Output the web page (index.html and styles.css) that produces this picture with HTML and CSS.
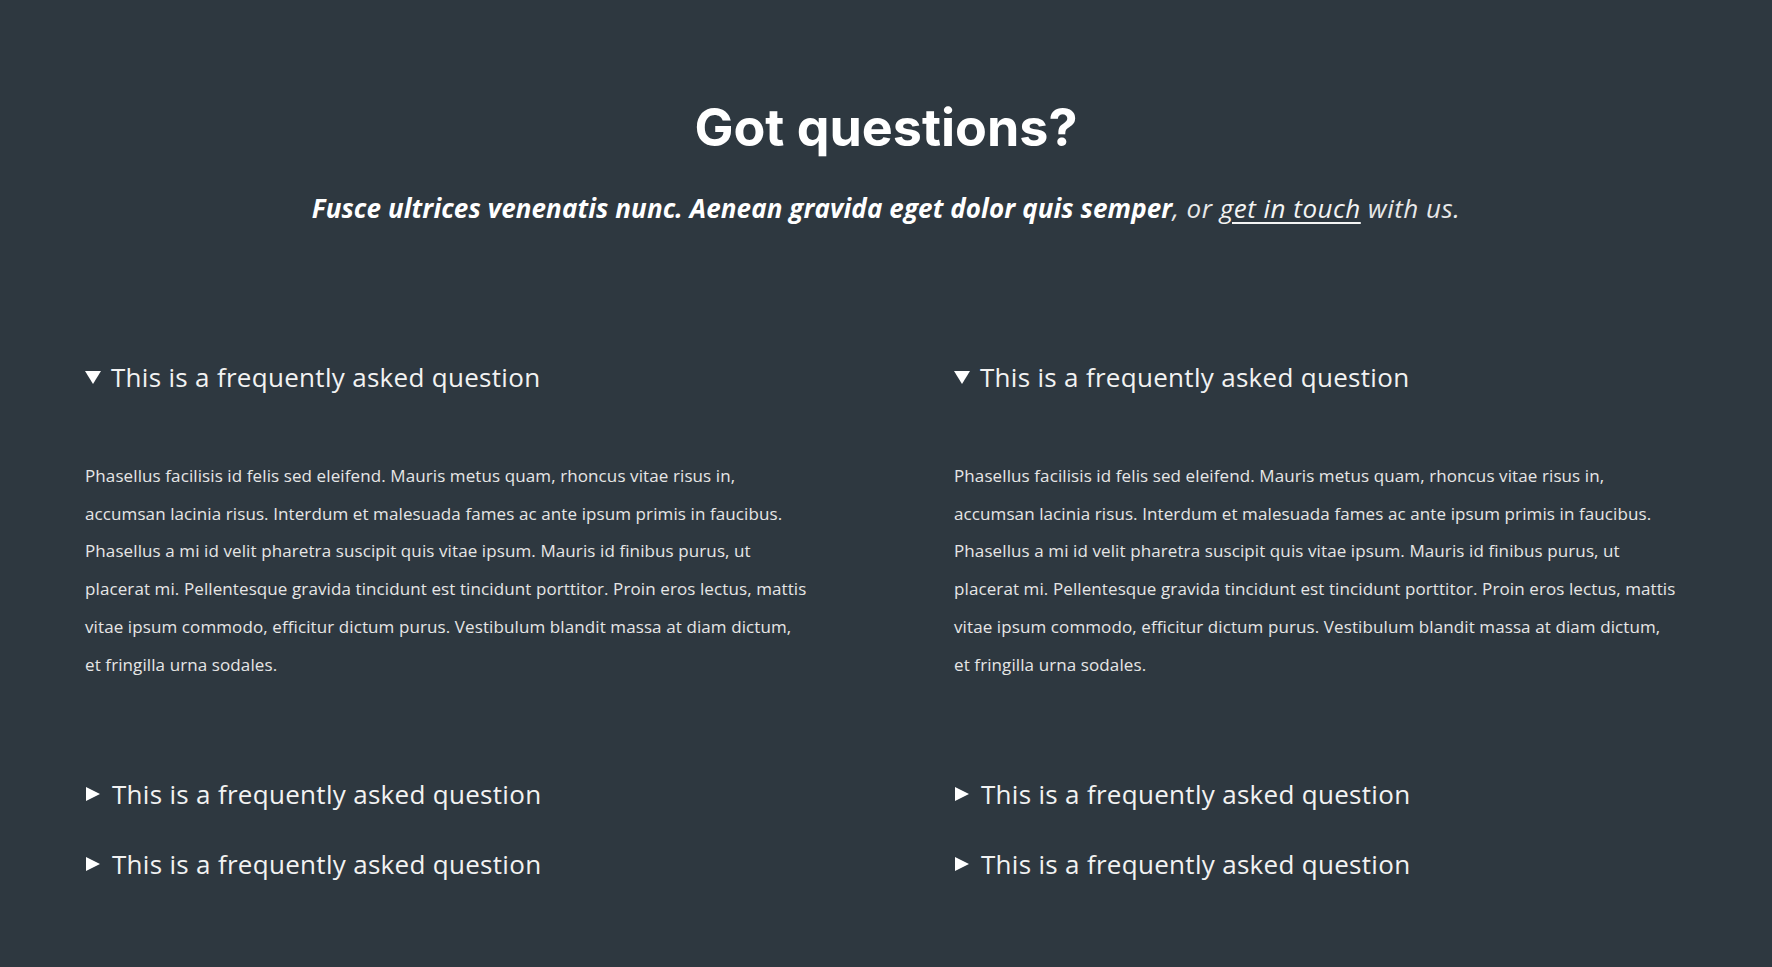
FILE: index.html
```html
<!DOCTYPE html>
<html lang="en">
<head>
  <meta charset="UTF-8">
  <title>FAQ</title>
  <link rel="stylesheet" href="styles.css">
</head>
<body>
  <section class="faq">
    <header class="faq-header">
      <h1>Got questions?</h1>
      <p class="lead"><strong>Fusce ultrices venenatis nunc. Aenean gravida eget dolor quis semper</strong>, or <a href="#">get in touch</a> with us.</p>
    </header>

    <div class="faq-grid">
      <details open>
        <summary>This is a frequently asked question</summary>
        <p>Phasellus facilisis id felis sed eleifend. Mauris metus quam, rhoncus vitae risus in, accumsan lacinia risus. Interdum et malesuada fames ac ante ipsum primis in faucibus. Phasellus a mi id velit pharetra suscipit quis vitae ipsum. Mauris id finibus purus, ut placerat mi. Pellentesque gravida tincidunt est tincidunt porttitor. Proin eros lectus, mattis vitae ipsum commodo, efficitur dictum purus. Vestibulum blandit massa at diam dictum, et fringilla urna sodales.</p>
      </details>
      <details open>
        <summary>This is a frequently asked question</summary>
        <p>Phasellus facilisis id felis sed eleifend. Mauris metus quam, rhoncus vitae risus in, accumsan lacinia risus. Interdum et malesuada fames ac ante ipsum primis in faucibus. Phasellus a mi id velit pharetra suscipit quis vitae ipsum. Mauris id finibus purus, ut placerat mi. Pellentesque gravida tincidunt est tincidunt porttitor. Proin eros lectus, mattis vitae ipsum commodo, efficitur dictum purus. Vestibulum blandit massa at diam dictum, et fringilla urna sodales.</p>
      </details>
      <details>
        <summary>This is a frequently asked question</summary>
      </details>
      <details>
        <summary>This is a frequently asked question</summary>
      </details>
      <details>
        <summary>This is a frequently asked question</summary>
      </details>
      <details>
        <summary>This is a frequently asked question</summary>
      </details>
    </div>
  </section>
</body>
</html>
```

FILE: styles.css
```css
body {
  margin: 0;
  background-color: #2e3840;
  color: #f4f4f4;
  font-family: "Open Sans", Arial, sans-serif;
}
.faq {
  padding: 96px 85px 60px;
}
.faq-header {
  text-align: center;
}
.faq-header h1 {
  margin: 0;
  font-family: Inter, Arial, sans-serif;
  font-size: 52px;
  font-weight: 700;
  line-height: 64px;
  color: #fff;
}
.lead {
  margin: 32px 0 0;
  font-size: 26px;
  font-style: italic;
  line-height: 32px;
  letter-spacing: 0.5px;
  color: #e8e8e8;
}
.lead strong {
  font-weight: 700;
  letter-spacing: 0.1px;
  color: #fff;
}
.lead a {
  color: #f4f4f4;
  text-decoration: underline;
  text-underline-offset: 4px;
}
.faq-grid {
  display: grid;
  grid-template-columns: 1fr 1fr;
  column-gap: 136px;
  row-gap: 30px;
  margin-top: 133px;
}
details summary {
  list-style: none;
  display: flex;
  align-items: center;
  gap: 10px;
  font-size: 26px;
  line-height: 40px;
  letter-spacing: 0.3px;
  color: #f2f2f2;
  cursor: pointer;
}
details summary::-webkit-details-marker {
  display: none;
}
details summary::before {
  content: "";
  width: 0;
  height: 0;
  margin-left: 1px;
  margin-right: 2px;
  border-top: 7.5px solid transparent;
  border-bottom: 7.5px solid transparent;
  border-left: 14px solid #fff;
}
details[open] summary::before {
  margin: 0;
  border-left: 8.5px solid transparent;
  border-right: 8.5px solid transparent;
  border-top: 13px solid #fff;
  border-bottom: 0;
}
details p {
  max-width: 723px;
  margin: 60px 0 61px;
  font-size: 17px;
  line-height: 37.7px;
  letter-spacing: 0.1px;
  color: #e6e6e6;
}
```
